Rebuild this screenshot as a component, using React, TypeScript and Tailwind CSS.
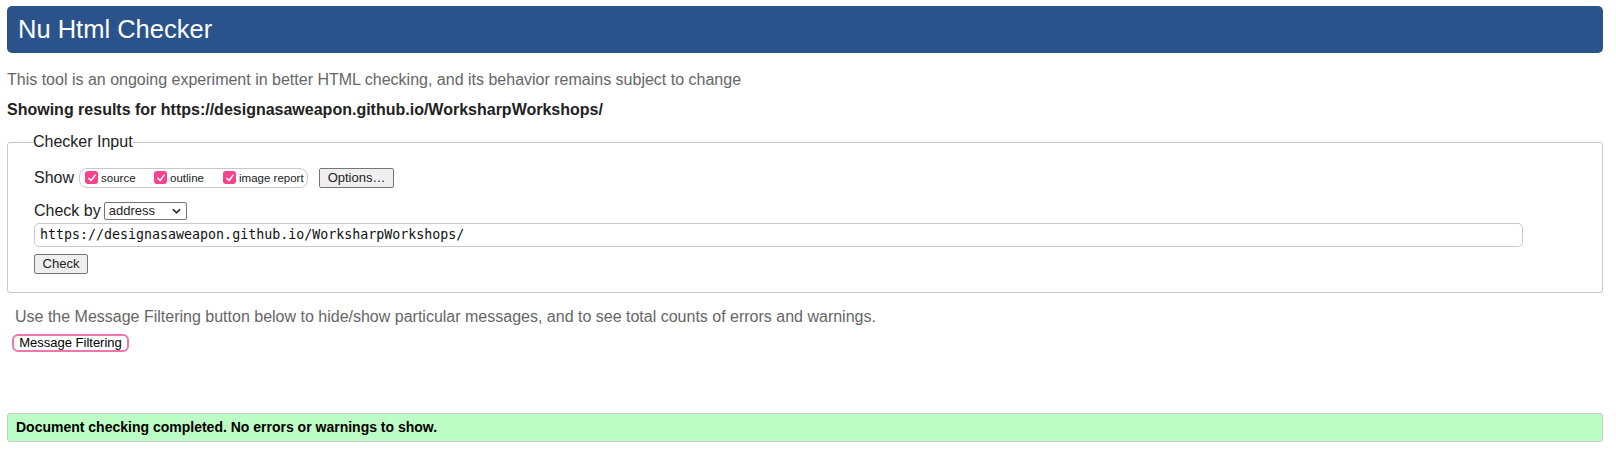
import React from "react";

const Check = () => (
  <span className="inline-flex w-[13px] h-[13px] rounded-[3px] bg-[#f7438e] items-center justify-center mr-[3px]">
    <svg viewBox="0 0 12 12" className="w-[10px] h-[10px]" fill="none">
      <path d="M2.2 6.3 L4.9 9 L9.8 2.6" stroke="white" strokeWidth="1.8" strokeLinecap="round" strokeLinejoin="round" />
    </svg>
  </span>
);

const App = () => {
  const options = ["source", "outline", "image report"];

  return (
    <div className="w-[1616px] h-[453px] bg-white pl-[7px] pr-[13px] pt-[6px] font-['Liberation_Sans',Arial,sans-serif] text-[#222]">
      <h1 className="h-[47px] bg-[#29538a] rounded-[5px] text-white text-[25.5px] leading-[47px] pl-[11px]">
        Nu Html Checker
      </h1>

      <p className="text-[#666] text-[16px] mt-[18px] leading-[18px]">
        This tool is an ongoing experiment in better HTML checking, and its behavior remains subject to change
      </p>
      <p className="font-bold text-[16px] mt-[12px] leading-[18px]">
        Showing results for https://designasaweapon.github.io/WorksharpWorkshops/
      </p>

      <fieldset className="mt-[14px] h-[160px] border border-[#c8c8c8] rounded-[3px] pl-[26px] pr-[24px]">
        <legend className="text-[16px] leading-[18px] px-0 ml-[-1px]">Checker Input</legend>

        <div className="flex items-center mt-[16px] h-[21px]">
          <span className="text-[16px] mr-[5px]">Show</span>
          <div className="flex items-center h-[20px] w-[229px] border border-[#c8c8c8] rounded-[8px] pl-[5px] text-[11.5px]">
            {options.map((o, i) => (
              <label key={o} className={"flex items-center " + (i < 2 ? "w-[69px]" : "")}>
                <Check />
                <span className="mt-[3px]">{o}</span>
              </label>
            ))}
          </div>
          <button className="ml-[11px] h-[20px] w-[75px] border border-[#767676] rounded-[2px] bg-[#efefef] text-[13px] leading-[18px]">
            Options…
          </button>
        </div>

        <div className="flex items-center mt-[13px] h-[20px]">
          <span className="text-[16px] mr-[3px]">Check by</span>
          <div className="relative w-[83px] h-[18px] border border-[#767676] rounded-[2px] bg-white text-[13px] leading-[16px] pl-[4px]">
            address
            <svg viewBox="0 0 10 6" className="absolute right-[5px] top-[5px] w-[9px] h-[6px]" fill="none">
              <path d="M1 1 L5 5 L9 1" stroke="#111" strokeWidth="1.6" />
            </svg>
          </div>
        </div>

        <div className="mt-[2px] w-[1489px] h-[24px] border border-[#c8c8c8] rounded-[5px] pl-[5px] font-['DejaVu_Sans_Mono',monospace] text-[13.3px] leading-[22px] text-[#111]">
          https://designasaweapon.github.io/WorksharpWorkshops/
        </div>

        <button className="mt-[7px] h-[20px] w-[54px] border border-[#767676] rounded-[2px] bg-[#efefef] text-[13px] leading-[18px] block">
          Check
        </button>
      </fieldset>

      <p className="text-[#666] text-[16px] mt-[15px] ml-[8px] leading-[18px]">
        Use the Message Filtering button below to hide/show particular messages, and to see total counts of errors and warnings.
      </p>
      <button className="mt-[8px] ml-[5px] h-[18px] w-[117px] border-2 border-[#f075a8] rounded-[6px] bg-white text-[13px] leading-[14px] text-black block">
        Message Filtering
      </button>

      <div className="mt-[61px] h-[29px] bg-[#bdfec6] border border-[#c8c8c8] rounded-[3px] pl-[8px] text-[14px] font-bold text-black leading-[27px]">
        Document checking completed. No errors or warnings to show.
      </div>
    </div>
  );
};

export default App;
